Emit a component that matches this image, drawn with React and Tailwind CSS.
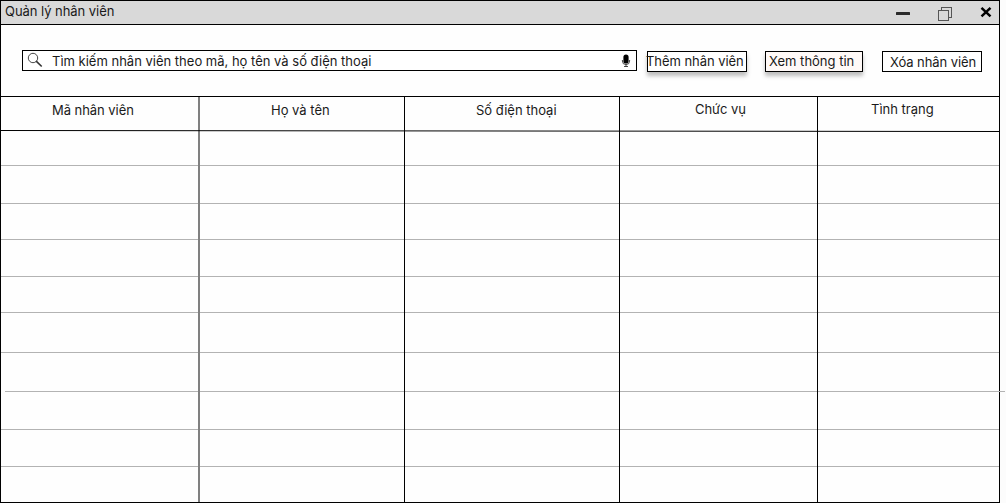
const columns = [
  { label: 'Mã nhân viên', cls: 'w-[199px] border-r-2 border-[#808080]', text: 'pl-[51px] pt-[3px] tracking-[-0.05px]' },
  { label: 'Họ và tên', cls: 'w-[205px] border-r border-black', text: 'pl-[71px] pt-[3px]' },
  { label: 'Số điện thoại', cls: 'w-[215px] border-r border-black', text: 'pl-[71px] pt-[3px]' },
  { label: 'Chức vụ', cls: 'w-[198px] border-r border-black', text: 'pl-[75px] pt-[2px] tracking-[-0.05px]' },
  { label: 'Tình trạng', cls: 'w-[181px]', text: 'pl-[53px] pt-[2px]' },
];

const rows = ['h-[35px]', 'h-[38px]', 'h-[36px]', 'h-[37px]', 'h-[36px]', 'h-[40px]', 'h-[39px]', 'h-[38px]', 'h-[37px]'];
const WIDE_ROW = 6;

function rowInset(row, col) {
  if (row !== WIDE_ROW) return '';
  if (col === 0) return 'ml-1';
  if (col === columns.length - 1) return '-mr-[6px]';
  return '';
}

function TitleBar() {
  return (
    <header className="flex h-6 items-start border-b border-black bg-[#d9d9d9] pl-1">
      <h1 className="h-5 grow leading-[21px] tracking-[-0.05px]">Quản lý nhân viên</h1>
      <svg className="h-[23px] w-[110px]" viewBox="889 1 110 23" fill="none">
        <rect x="896" y="12" width="14" height="3" rx="0.5" fill="#2b2b2b" />
        <g stroke="#555" strokeWidth="1">
          <rect x="941.500" y="7.500" width="10" height="10" />
          <rect x="938.500" y="10.500" width="10" height="10" fill="#d9d9d9" />
        </g>
        <path d="M981.500 7.800L990.500 16.300M990.500 7.800L981.500 16.300" stroke="#000" strokeWidth="2.500" />
      </svg>
    </header>
  );
}

function Toolbar() {
  return (
    <div className="flex h-[72px] items-start border-b border-black pl-[21px] pt-[25px]">
      <div className="flex h-[21px] w-[615px] items-center border border-black bg-white">
        <svg className="ml-1 h-[19px] w-[18px]" viewBox="27 51 18 19" fill="none" stroke="#333">
          <circle cx="33" cy="58" r="4.700" strokeWidth="0.900" />
          <path d="M36.200 61.200L41.700 66.500" strokeWidth="1.600" />
        </svg>
        <span className="ml-[7px] grow pt-px leading-5">Tìm kiếm nhân viên theo mã, họ tên và số điện thoại</span>
        <svg className="mr-[5px] h-[19px] w-[10px]" viewBox="621 51 10 19">
          <rect x="623.400" y="54.500" width="5.200" height="9" rx="2.600" fill="#000" />
          <path d="M622.400 60V61a3.600 3.600 0 0 0 7.200 0V60M626 64.500V67M624 66.500H628" fill="none" stroke="#333" strokeWidth="0.900" />
        </svg>
      </div>
      <button className="ml-[10px] mt-px flex h-[21px] w-[100px] items-center border border-black bg-white shadow-[0_4px_4px_rgba(0,0,0,0.25)]">
        <span className="-ml-[2px] whitespace-nowrap tracking-[-0.05px]">Thêm nhân viên</span>
      </button>
      <button className="ml-[18px] mt-px flex h-[21px] w-[98px] items-center whitespace-nowrap border border-black bg-[#fff9f7] pl-[3px] shadow-[0_4px_4px_rgba(0,0,0,0.25)]">
        Xem thông tin
      </button>
      <button className="ml-[19px] mt-px flex h-[21px] w-[100px] items-center whitespace-nowrap border border-black bg-white pl-[7px] pt-[2px] tracking-[-0.08px]">
        Xóa nhân viên
      </button>
    </div>
  );
}

function EmployeeTable() {
  return (
    <div className="relative flex h-[405px]">
      {columns.map((column, c) => (
        <section key={column.label} className={`shrink-0 ${column.cls}`}>
          <h2 className={`h-[34px] leading-5 ${column.text}`}>{column.label}</h2>
          {rows.map((height, r) => (
            <div key={r} className={`border-b border-[#b3b3b3] ${height} ${rowInset(r, c)}`} />
          ))}
        </section>
      ))}
      <svg className="absolute left-0 top-[32px] h-[4px] w-[998px]" viewBox="0 0 998 4">
        <path d="M0 1.500L998 2.500" stroke="#000" />
      </svg>
    </div>
  );
}

export default function App() {
  return (
    <main className="h-[503px] w-[1006px] overflow-hidden bg-[#fcfcfc] font-['Inter',sans-serif] text-[13px] text-[#1a1a1a]">
      <div className="h-[503px] w-[1000px] border border-black bg-[#fefefe]">
        <TitleBar />
        <Toolbar />
        <EmployeeTable />
      </div>
    </main>
  );
}
